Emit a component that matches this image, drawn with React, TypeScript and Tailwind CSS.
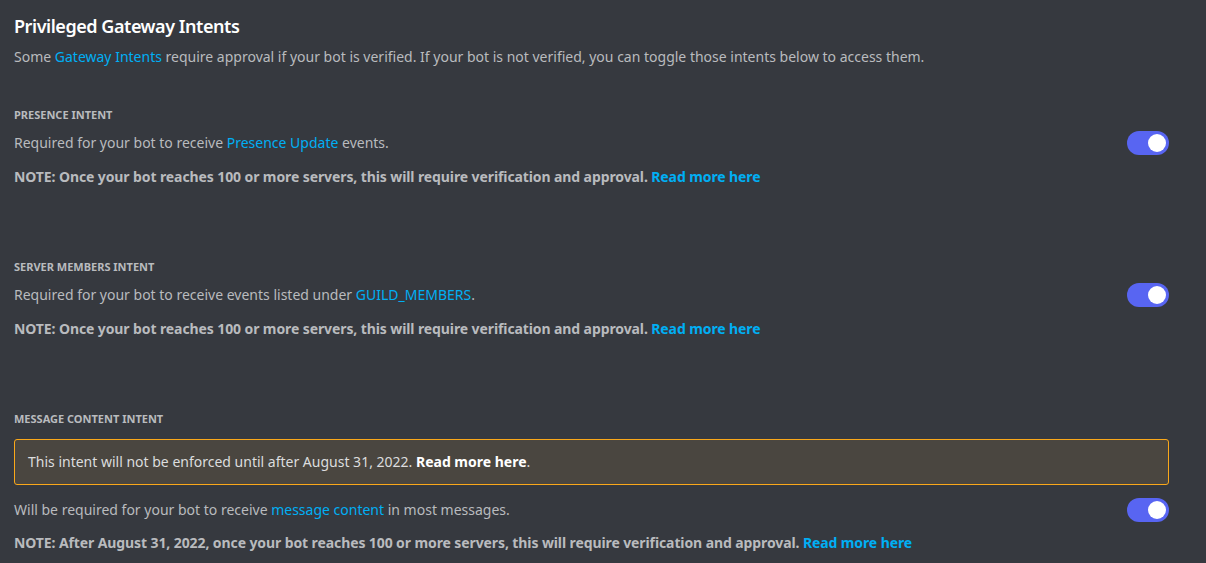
import React from "react";

function Toggle() {
  return (
    <div className="w-[42px] h-[24px] rounded-full bg-[#5865f2] relative shrink-0">
      <div className="absolute right-[3px] top-[3px] w-[18px] h-[18px] rounded-full bg-white" />
    </div>
  );
}

function Link({ children }: { children: React.ReactNode }) {
  return <span className="text-[#00aff4]">{children}</span>;
}

function Note({ children }: { children: React.ReactNode }) {
  return (
    <div className="text-[14px] leading-[20px] font-bold tracking-[-0.1px] text-[#b9bbbe]">{children}</div>
  );
}

function Label({ children }: { children: React.ReactNode }) {
  return (
    <div className="text-[11px] leading-[16px] font-bold uppercase text-[#b9bbbe]">{children}</div>
  );
}

function Row({ children }: { children: React.ReactNode }) {
  return (
    <div className="flex items-center justify-between h-[24px]">
      <div className="text-[14px] leading-[20px] text-[#b9bbbe]">{children}</div>
      <Toggle />
    </div>
  );
}

export default function App() {
  return (
    <div
      className="w-[1206px] h-[563px] bg-[#36393f] pl-[14px] pr-[37px] overflow-hidden"
      style={{ fontFamily: '"Noto Sans", "Open Sans", sans-serif' }}
    >
      <div className="pt-[14px] text-[18px] leading-[24px] font-semibold tracking-[-0.45px] text-white">
        Privileged Gateway Intents
      </div>
      <div className="mt-[9px] text-[14px] leading-[20px] text-[#b9bbbe]">
        Some <Link>Gateway Intents</Link> require approval if your bot is verified. If your bot is not verified, you can toggle those intents below to access them.
      </div>

      <div className="mt-[40px]">
        <Label>Presence Intent</Label>
        <div className="mt-[8px]">
          <Row>
            Required for your bot to receive <Link>Presence Update</Link> events.
          </Row>
        </div>
        <div className="mt-[12px]">
          <Note>
            NOTE: Once your bot reaches 100 or more servers, this will require verification and approval. <Link>Read more here</Link>
          </Note>
        </div>
      </div>

      <div className="mt-[72px]">
        <Label>Server Members Intent</Label>
        <div className="mt-[8px]">
          <Row>
            Required for your bot to receive events listed under <Link>GUILD_MEMBERS</Link>.
          </Row>
        </div>
        <div className="mt-[12px]">
          <Note>
            NOTE: Once your bot reaches 100 or more servers, this will require verification and approval. <Link>Read more here</Link>
          </Note>
        </div>
      </div>

      <div className="mt-[72px]">
        <Label>Message Content Intent</Label>
        <div className="mt-[12px] h-[46px] rounded-[3px] border border-[#faa81a] bg-[#4a4640] px-[13px] flex items-center text-[14px] leading-[20px] text-[#dcddde]">
          <span>
            This intent will not be enforced until after August 31, 2022. <span className="font-bold text-white">Read more here</span>.
          </span>
        </div>
        <div className="mt-[13px]">
          <Row>
            Will be required for your bot to receive <Link>message content</Link> in most messages.
          </Row>
        </div>
        <div className="mt-[11px]">
          <Note>
            NOTE: After August 31, 2022, once your bot reaches 100 or more servers, this will require verification and approval. <Link>Read more here</Link>
          </Note>
        </div>
      </div>
    </div>
  );
}
